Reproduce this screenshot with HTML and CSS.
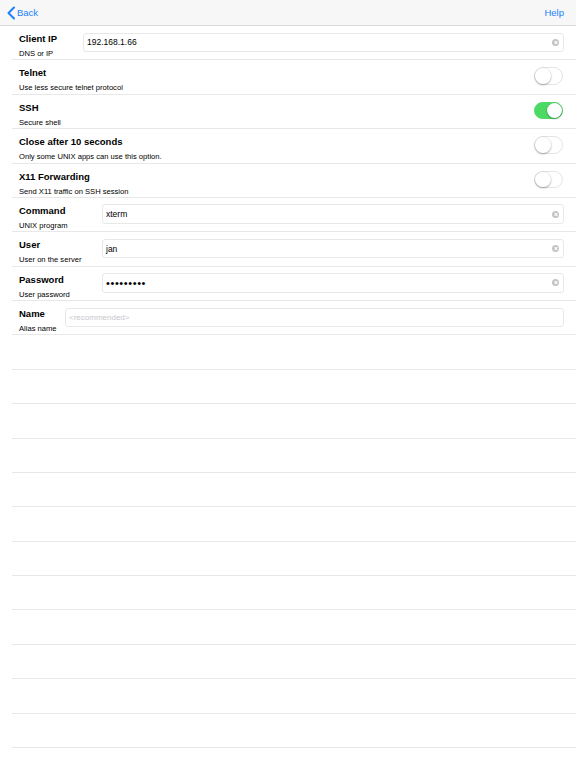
FILE: index.html
```html
<!DOCTYPE html>
<html lang="en">
<head>
    <meta charset="UTF-8">
    <meta name="viewport" content="width=device-width, initial-scale=1.0">
    <title>Connection</title>
    <link rel="stylesheet" href="styles.css">
</head>
<body>
    <div class="navbar">
        <a class="nav-btn back" href="#">
            <svg width="10" height="14" viewBox="0 0 10 14"><polyline points="8,1.5 2.5,7 8,12.5" fill="none" stroke="#1a82fb" stroke-width="2" stroke-linecap="round" stroke-linejoin="round"/></svg>
            Back
        </a>
        <a class="nav-btn" href="#">Help</a>
    </div>

    <div class="list">
        <div class="row">
            <div class="label w-ip">
                <div class="title">Client IP</div>
                <div class="sub">DNS or IP</div>
            </div>
            <div class="field"><span class="value">192.168.1.66</span><span class="clear"></span></div>
        </div>
        <div class="row">
            <div class="label">
                <div class="title">Telnet</div>
                <div class="sub">Use less secure telnet protocol</div>
            </div>
            <div class="switch"></div>
        </div>
        <div class="row">
            <div class="label">
                <div class="title">SSH</div>
                <div class="sub">Secure shell</div>
            </div>
            <div class="switch on"></div>
        </div>
        <div class="row">
            <div class="label">
                <div class="title">Close after 10 seconds</div>
                <div class="sub">Only some UNIX apps can use this option.</div>
            </div>
            <div class="switch"></div>
        </div>
        <div class="row">
            <div class="label">
                <div class="title">X11 Forwarding</div>
                <div class="sub">Send X11 traffic on SSH session</div>
            </div>
            <div class="switch"></div>
        </div>
        <div class="row">
            <div class="label w-cmd">
                <div class="title">Command</div>
                <div class="sub">UNIX program</div>
            </div>
            <div class="field"><span class="value">xterm</span><span class="clear"></span></div>
        </div>
        <div class="row">
            <div class="label w-cmd">
                <div class="title">User</div>
                <div class="sub">User on the server</div>
            </div>
            <div class="field"><span class="value">jan</span><span class="clear"></span></div>
        </div>
        <div class="row">
            <div class="label w-cmd">
                <div class="title">Password</div>
                <div class="sub">User password</div>
            </div>
            <div class="field"><span class="value dots">•••••••••</span><span class="clear"></span></div>
        </div>
        <div class="row">
            <div class="label w-name">
                <div class="title">Name</div>
                <div class="sub">Alias name</div>
            </div>
            <div class="field"><span class="placeholder">&lt;recommended&gt;</span></div>
        </div>
        <div class="row"></div>
        <div class="row"></div>
        <div class="row"></div>
        <div class="row"></div>
        <div class="row"></div>
        <div class="row"></div>
        <div class="row"></div>
        <div class="row"></div>
        <div class="row"></div>
        <div class="row"></div>
        <div class="row"></div>
        <div class="row"></div>
    </div>
</body>
</html>
```

FILE: styles.css
```css
body {
    margin: 0;
    font-family: "Liberation Sans", Arial, sans-serif;
    background: #fff;
    color: #000;
    overflow: hidden;
}
.navbar {
    height: 25px;
    background: #f7f7f7;
    border-bottom: 1px solid #d9d9d9;
    display: flex;
    justify-content: space-between;
    align-items: center;
    padding: 0 12px 0 6px;
}
.nav-btn {
    color: #1a82fb;
    text-decoration: none;
    font-size: 9.5px;
    display: flex;
    align-items: center;
    gap: 1px;
}
.back svg {
    display: block;
}
.list {
    margin-left: 12px;
}
.row {
    box-sizing: border-box;
    height: 34.38px;
    border-bottom: 1px solid #e8e8e8;
    display: flex;
    align-items: flex-start;
    padding: 0 12px 0 7px;
}
.label {
    flex: 1;
    padding-top: 7px;
}
.w-ip { flex: 0 0 64px; }
.w-cmd { flex: 0 0 83px; }
.w-name { flex: 0 0 46px; }
.title {
    font-size: 9.5px;
    font-weight: bold;
    line-height: 12px;
}
.sub {
    font-size: 7.6px;
    line-height: 10px;
    margin-top: 4px;
}
.field {
    flex: 1;
    box-sizing: border-box;
    height: 19.5px;
    margin-top: 6.5px;
    border: 1px solid #e8e8e8;
    border-radius: 3px;
    display: flex;
    align-items: center;
    padding: 0 4px 0 3px;
    font-size: 8.5px;
}
.value {
    flex: 1;
}
.dots {
    font-size: 11px;
    letter-spacing: 0.6px;
}
.placeholder {
    color: #c7c7cd;
    font-size: 8px;
}
.clear {
    width: 7px;
    height: 7px;
    border-radius: 50%;
    background: #c4c4c8;
    position: relative;
}
.clear::before,
.clear::after {
    content: "";
    position: absolute;
    left: 1.5px;
    top: 3px;
    width: 4px;
    height: 1px;
    background: #fff;
    transform: rotate(45deg);
}
.clear::after {
    transform: rotate(-45deg);
}
.switch {
    box-sizing: border-box;
    width: 29px;
    height: 17.5px;
    margin-top: 7px;
    margin-right: 1px;
    border-radius: 9px;
    border: 1px solid #e4e4e4;
    background: #fff;
    position: relative;
}
.switch::after {
    content: "";
    position: absolute;
    top: 0;
    left: 0;
    width: 15.5px;
    height: 15.5px;
    border-radius: 50%;
    background: #fff;
    box-shadow: 0 1px 2px rgba(0, 0, 0, 0.3), 0 0 0 0.5px rgba(0, 0, 0, 0.08);
}
.switch.on {
    background: #4cd964;
    border-color: #4cd964;
}
.switch.on::after {
    left: auto;
    right: 0;
}
```
